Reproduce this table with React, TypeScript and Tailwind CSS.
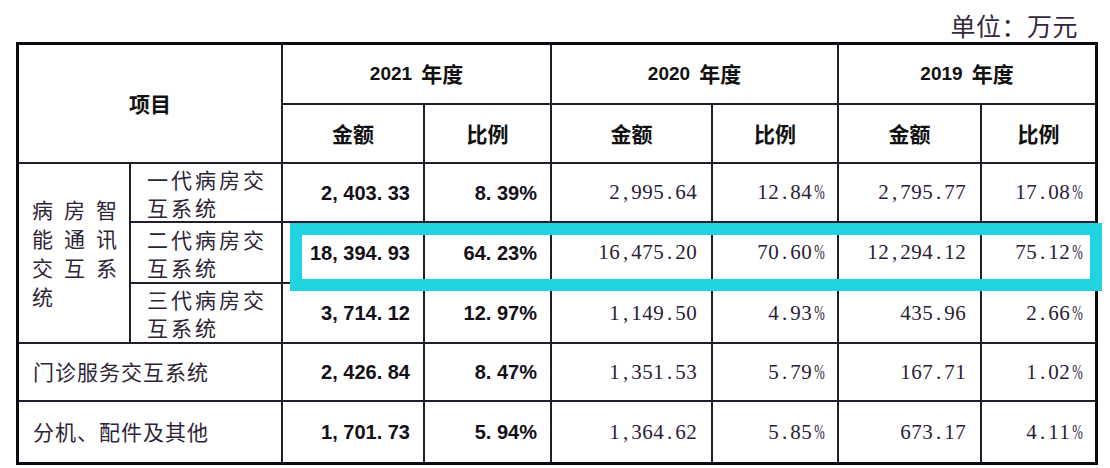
import React from 'react';

const rows = [
  { label: '一代病房交互系统', cells: ['2, 403. 33', '8. 39%', '2,995.64', '12.84%', '2,795.77', '17.08%'] },
  { label: '二代病房交互系统', cells: ['18, 394. 93', '64. 23%', '16,475.20', '70.60%', '12,294.12', '75.12%'] },
  { label: '三代病房交互系统', cells: ['3, 714. 12', '12. 97%', '1,149.50', '4.93%', '435.96', '2.66%'] },
];

const bottomRows = [
  { label: '门诊服务交互系统', cells: ['2, 426. 84', '8. 47%', '1,351.53', '5.79%', '167.71', '1.02%'] },
  { label: '分机、配件及其他', cells: ['1, 701. 73', '5. 94%', '1,364.62', '5.85%', '673.17', '4.11%'] },
];

const years = ['2021', '2020', '2019'];

// SimSun-style numbers: every glyph sits in a half-width slot
function SerifNum({ value }: { value: string }) {
  return (
    <span className="font-['Liberation_Serif',serif] text-[21px] leading-none text-[#2a2035]">
      {value.split('').map((ch, i) => (
        <span
          key={i}
          className={
            ch === '%'
              ? 'inline-block w-[11px] text-center scale-x-[0.6] origin-center'
              : 'inline-block w-[11px] text-center'
          }
        >
          {ch}
        </span>
      ))}
    </span>
  );
}

function NumberCells({ cells }: { cells: string[] }) {
  return (
    <>
      {cells.map((value, i) =>
        i < 2 ? (
          <div
            key={i}
            className="bg-white flex items-center justify-end pr-[13px] font-['Liberation_Sans',sans-serif] font-bold text-[20px] text-[#141018] whitespace-pre"
          >
            {value}
          </div>
        ) : (
          <div key={i} className="bg-white flex items-center justify-end pr-[14px]">
            <SerifNum value={value} />
          </div>
        )
      )}
    </>
  );
}

export default function App() {
  return (
    <div className="relative w-[1110px] h-[468px] bg-white overflow-hidden font-['Noto_Sans_CJK_SC',sans-serif]">
      <div className="h-[42px] flex items-start justify-end pr-[32px] pt-[11px]">
        <span className="text-[25px] leading-[28px] tracking-[0.5px] text-[#35283f]">单位：万元</span>
      </div>

      <div className="ml-[16px] w-fit border-[3px] border-[#0c0a10] bg-[#231c2b] grid gap-[2px] grid-cols-[110px_150px_140px_125px_159px_124px_141px_113px] grid-rows-[58px_57px_57px_59px_58px_56px_60px]">
        {/* header */}
        <div className="col-span-2 row-span-2 bg-white flex items-center justify-center text-[21px] font-bold text-[#111]">
          项目
        </div>
        {years.map((y) => (
          <div key={y} className="col-span-2 bg-white flex items-center justify-center font-bold text-[#111]">
            <span className="font-['Liberation_Sans',sans-serif] text-[19px]">{y}</span>
            <span className="ml-[9px] text-[21px]">年度</span>
          </div>
        ))}
        {years.map((y) => (
          <React.Fragment key={y}>
            <div className="bg-white flex items-center justify-center text-[21px] font-bold text-[#111]">金额</div>
            <div className="bg-white flex items-center justify-center text-[21px] font-bold text-[#111]">比例</div>
          </React.Fragment>
        ))}

        {/* ward systems */}
        <div className="row-span-3 bg-white flex items-center pl-[13px]">
          <p className="w-[97px] text-[21px] leading-[29px] tracking-[11px] text-[#2d2536]">病房智能通讯交互系统</p>
        </div>
        {rows.map((row) => (
          <React.Fragment key={row.label}>
            <div className="bg-white flex items-center pl-[16px]">
              <p className="w-[130px] text-[21px] leading-[28px] tracking-[3px] text-[#2d2536]">{row.label}</p>
            </div>
            <NumberCells cells={row.cells} />
          </React.Fragment>
        ))}

        {bottomRows.map((row) => (
          <React.Fragment key={row.label}>
            <div className="col-span-2 bg-white flex items-center pl-[14px] text-[21px] tracking-[1px] text-[#2d2536]">
              {row.label}
            </div>
            <NumberCells cells={row.cells} />
          </React.Fragment>
        ))}
      </div>

      {/* highlight around the 二代 row */}
      <div className="absolute left-[290px] top-[223px] w-[812px] h-[68px] border-[12px] border-[#1fd4de]" />
    </div>
  );
}
